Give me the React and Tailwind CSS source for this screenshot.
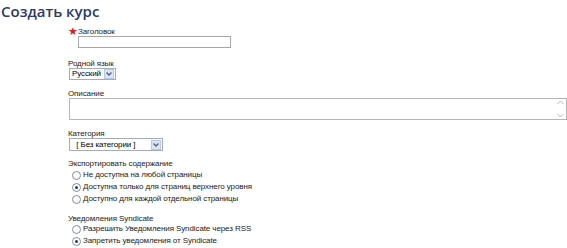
import React, { useState } from "react";

const font = "font-['Liberation_Sans',Arial,sans-serif]";

const Radio = ({ checked, label, onClick }) => (
  <label className="flex items-center h-[12px] cursor-pointer" onClick={onClick}>
    <span className="w-[9px] h-[9px] rounded-full border border-[#7d8ca6] bg-white flex items-center justify-center mr-[2px] shrink-0">
      {checked && <span className="w-[3px] h-[3px] rounded-full bg-[#2a3a5a]" />}
    </span>
    <span>{label}</span>
  </label>
);

const Select = ({ value, width, height }) => (
  <div className={`flex items-center border border-[#a5acb5] bg-white ${width} ${height}`}>
    <span className="flex-1 px-[2px] leading-[10px] text-black whitespace-pre">{value}</span>
    <span className="w-[10px] h-[10px] mr-[1px] bg-[#dbe4f5] border border-[#b8c8e6] flex items-center justify-center">
      <svg width="6" height="4" viewBox="0 0 6 4">
        <path d="M0.5 0.5 L3 3 L5.5 0.5" stroke="#4d6185" strokeWidth="1.3" fill="none" />
      </svg>
    </span>
  </div>
);

const App = () => {
  const [exportMode, setExportMode] = useState(1);
  const [syndicate, setSyndicate] = useState(1);

  return (
    <div className={`w-[567px] h-[248px] bg-white overflow-hidden ${font} text-[8px] tracking-[-0.1px] text-[#222]`}>
      {/* Title */}
      <h1 className="h-[22px] pl-[1px] pt-[1px] text-[15px] font-semibold leading-[20px] text-[#2b3a67] font-['Open_Sans',sans-serif] tracking-normal">
        Создать курс
      </h1>

      {/* Form */}
      <div className="pl-[68px] pt-[5px]">
        <div className="flex items-start h-[21px]">
          <span className="text-[#d42020] text-[11px] leading-[9px] h-[9px] w-[10px]">★</span>
          <div>
            <div className="h-[9px] leading-[9px]">Заголовок</div>
            <div className="w-[153px] h-[12px] border border-[#a8a8a8] bg-white" />
          </div>
        </div>

        <div className="mt-[11px] h-[9px] leading-[9px]">Родной язык</div>
        <div className="ml-[1px]">
          <Select value="Русский" width="w-[47px]" height="h-[12px]" />
        </div>

        <div className="mt-[9px] h-[9px] leading-[9px]">Описание</div>
        <div className="ml-[1px] h-[22px] border border-[#b5b5b5] bg-white flex justify-end">
          <div className="w-[11px] flex flex-col justify-between items-center py-[1px]">
            <svg width="7" height="5" viewBox="0 0 7 5">
              <path d="M0.5 4 L3.5 1 L6.5 4" stroke="#b5b5b5" strokeWidth="1" fill="none" />
            </svg>
            <svg width="7" height="5" viewBox="0 0 7 5">
              <path d="M0.5 1 L3.5 4 L6.5 1" stroke="#b5b5b5" strokeWidth="1" fill="none" />
            </svg>
          </div>
        </div>

        <div className="mt-[9px] h-[9px] leading-[9px]">Категория</div>
        <div className="ml-[1px]">
          <Select value="  [ Без категории ]  " width="w-[94px]" height="h-[13px]" />
        </div>

        <div className="mt-[8px] h-[9px] leading-[9px]">Экспортировать содержание</div>
        <div className="ml-[4px] mt-[1px]">
          {["Не доступна на любой страницы", "Доступна только для страниц верхнего уровня", "Доступно для каждой отдельной страницы"].map(
            (t, i) => (
              <Radio key={i} label={t} checked={exportMode === i} onClick={() => setExportMode(i)} />
            )
          )}
        </div>

        <div className="mt-[9px] h-[9px] leading-[9px]">Уведомления Syndicate</div>
        <div className="ml-[4px]">
          {["Разрешить Уведомления Syndicate через RSS", "Запретить уведомления от Syndicate"].map((t, i) => (
            <Radio key={i} label={t} checked={syndicate === i} onClick={() => setSyndicate(i)} />
          ))}
        </div>
      </div>
    </div>
  );
};

export default App;
